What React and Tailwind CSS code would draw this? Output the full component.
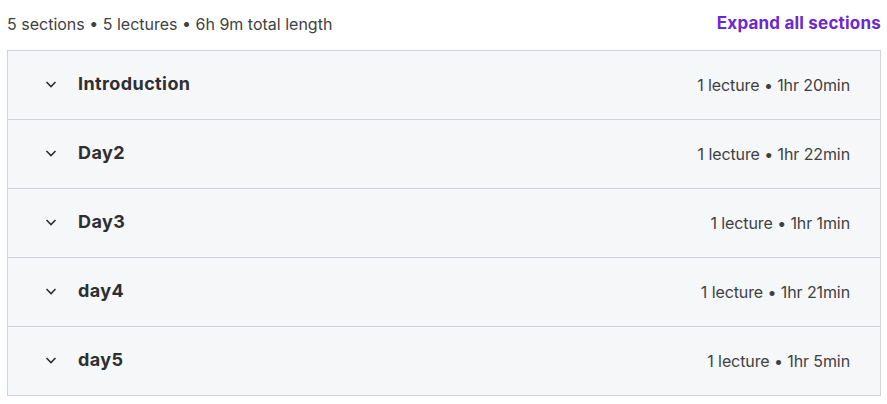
import React from "react";

const sections = [
  { title: "Introduction", meta: "1 lecture • 1hr 20min" },
  { title: "Day2", meta: "1 lecture • 1hr 22min" },
  { title: "Day3", meta: "1 lecture • 1hr 1min" },
  { title: "day4", meta: "1 lecture • 1hr 21min" },
  { title: "day5", meta: "1 lecture • 1hr 5min" },
];

function Chevron() {
  return (
    <svg width="12" height="12" viewBox="0 0 12 12" fill="none" className="shrink-0">
      <path d="M1.5 4l4.5 4.5L10.5 4" stroke="#2d2f31" strokeWidth="1.6" />
    </svg>
  );
}

export default function App() {
  return (
    <div
      className="w-[887px] h-[404px] bg-white pl-[7px] pr-[6px] text-[#2d2f31]"
      style={{ fontFamily: "Inter, 'Noto Sans', sans-serif" }}
    >
      <div className="flex h-[50px] items-center justify-between pb-[2px]">
        <span className="text-[16px] text-[#3e4143]">
          5 sections • 5 lectures • 6h 9m total length
        </span>
        <button className="text-[17px] font-bold tracking-[0.2px] text-[#6d28d2]">
          Expand all sections
        </button>
      </div>
      <div className="border border-[#d1d2e0]">
        {sections.map((s, i) => (
          <div
            key={s.title}
            className={`flex items-center justify-between bg-[#f6f7f9] pl-[37px] pr-[30px] ${
              i > 0 ? "h-[69px] border-t border-[#d1d2e0]" : "h-[68px]"
            }`}
          >
            <div className="flex items-center gap-[21px] pb-[3px]">
              <Chevron />
              <span className="text-[18px] font-bold tracking-[0.4px] text-[#2d2f31]">{s.title}</span>
            </div>
            <span className="text-[16px] tracking-[-0.1px] text-[#3e4143]">{s.meta}</span>
          </div>
        ))}
      </div>
    </div>
  );
}
